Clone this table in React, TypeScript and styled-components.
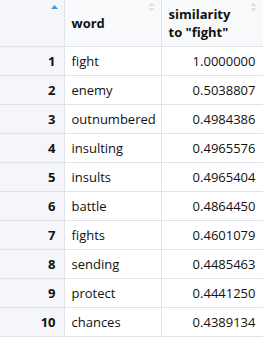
import React from "react";
import styled, { createGlobalStyle } from "styled-components";

const Global = createGlobalStyle`
  html, body { margin: 0; padding: 0; background: #ffffff; }
  body { font-family: "Open Sans", "Noto Sans", "Liberation Sans", sans-serif; }
`;

const Table = styled.table`
  border-collapse: collapse;
  table-layout: fixed;
  width: 263px;
  font-size: 13px;
  color: #111;
`;

const HeadRow = styled.tr`
  height: 46px;
`;

const BodyRow = styled.tr`
  height: 29px;
`;

const HeadCell = styled.th<{ $w: number; $gray?: boolean }>`
  position: relative;
  box-sizing: border-box;
  width: ${(p) => p.$w}px;
  padding: 0 8px 0 7px;
  background: ${(p) => (p.$gray ? "#f4f6f9" : "#f8f9fb")};
  border-right: 1px solid #dfe3e8;
  border-bottom: 1px solid #dfe3e8;
  text-align: left;
  font-weight: 700;
  line-height: 18px;
  vertical-align: middle;
`;

const Cell = styled.td<{ $num?: boolean; $index?: boolean }>`
  padding: 0 7px 0 7px;
  border-right: 1px solid #dfe3e8;
  border-bottom: 1px solid #dfe3e8;
  background: ${(p) => (p.$index ? "#f4f6f9" : "#ffffff")};
  text-align: ${(p) => (p.$num || p.$index ? "right" : "left")};
  font-weight: ${(p) => (p.$index ? 700 : 400)};
  padding-right: ${(p) => (p.$index ? "8px" : "7px")};
  white-space: nowrap;
  vertical-align: middle;
`;

const SortIcon = styled.svg`
  position: absolute;
  top: 1px;
  right: 5px;
`;

const ActiveSort = () => (
  <SortIcon width="9" height="12" viewBox="0 0 9 12">
    <path d="M1 8 L4.5 4 L8 8 Z" fill="#3b9ae1" />
  </SortIcon>
);

const IdleSort = () => (
  <SortIcon width="9" height="12" viewBox="0 0 9 12">
    <path d="M1.5 5 L4.5 1.5 L7.5 5 Z" fill="#dcdfe3" />
    <path d="M1.5 7 L4.5 10.5 L7.5 7 Z" fill="#dcdfe3" />
  </SortIcon>
);

const rows: [string, string][] = [
  ["fight", "1.0000000"],
  ["enemy", "0.5038807"],
  ["outnumbered", "0.4984386"],
  ["insulting", "0.4965576"],
  ["insults", "0.4965404"],
  ["battle", "0.4864450"],
  ["fights", "0.4601079"],
  ["sending", "0.4485463"],
  ["protect", "0.4441250"],
  ["chances", "0.4389134"],
];

export default function App() {
  return (
    <>
      <Global />
      <Table>
        <thead>
          <HeadRow>
            <HeadCell $w={64} $gray>
              <ActiveSort />
            </HeadCell>
            <HeadCell $w={97}>
              word
              <IdleSort />
            </HeadCell>
            <HeadCell $w={102}>
              similarity
              <br />
              to "fight"
              <IdleSort />
            </HeadCell>
          </HeadRow>
        </thead>
        <tbody>
          {rows.map(([w, s], i) => (
            <BodyRow key={w}>
              <Cell $index>{i + 1}</Cell>
              <Cell>{w}</Cell>
              <Cell $num>{s}</Cell>
            </BodyRow>
          ))}
        </tbody>
      </Table>
    </>
  );
}
